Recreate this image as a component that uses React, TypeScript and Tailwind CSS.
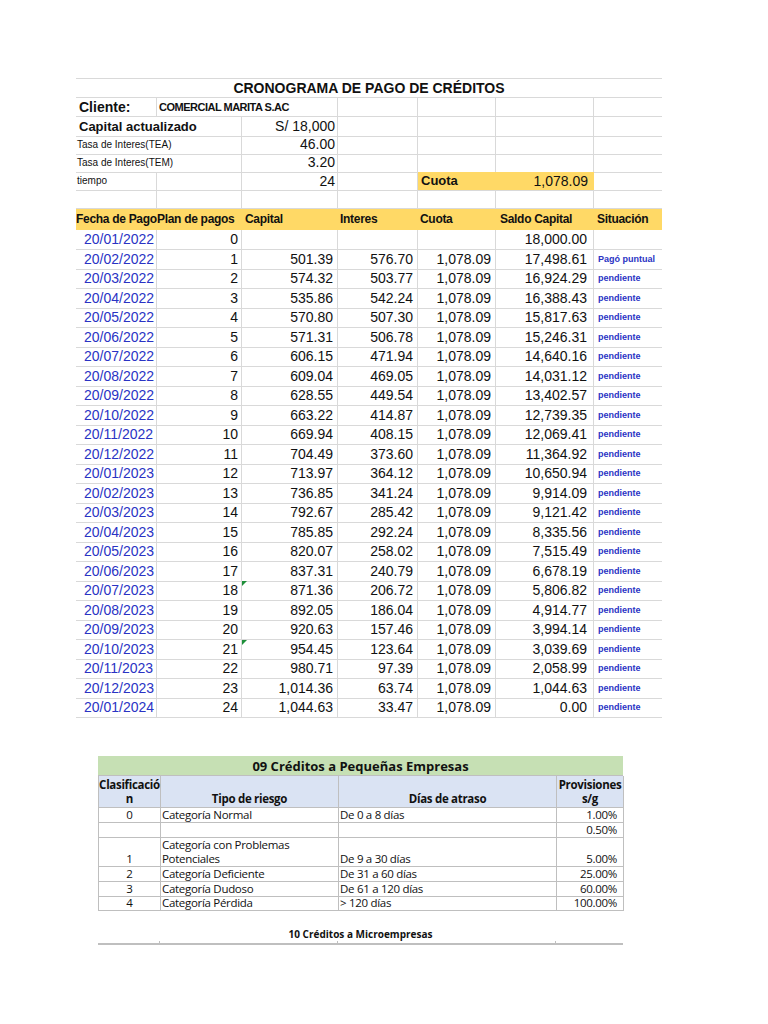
import React from "react";

const data: [string, string, string, string, string, string, string][] = [
  ["20/01/2022","0","","","","18,000.00",""],
  ["20/02/2022","1","501.39","576.70","1,078.09","17,498.61","Pagó puntual"],
  ["20/03/2022","2","574.32","503.77","1,078.09","16,924.29","pendiente"],
  ["20/04/2022","3","535.86","542.24","1,078.09","16,388.43","pendiente"],
  ["20/05/2022","4","570.80","507.30","1,078.09","15,817.63","pendiente"],
  ["20/06/2022","5","571.31","506.78","1,078.09","15,246.31","pendiente"],
  ["20/07/2022","6","606.15","471.94","1,078.09","14,640.16","pendiente"],
  ["20/08/2022","7","609.04","469.05","1,078.09","14,031.12","pendiente"],
  ["20/09/2022","8","628.55","449.54","1,078.09","13,402.57","pendiente"],
  ["20/10/2022","9","663.22","414.87","1,078.09","12,739.35","pendiente"],
  ["20/11/2022","10","669.94","408.15","1,078.09","12,069.41","pendiente"],
  ["20/12/2022","11","704.49","373.60","1,078.09","11,364.92","pendiente"],
  ["20/01/2023","12","713.97","364.12","1,078.09","10,650.94","pendiente"],
  ["20/02/2023","13","736.85","341.24","1,078.09","9,914.09","pendiente"],
  ["20/03/2023","14","792.67","285.42","1,078.09","9,121.42","pendiente"],
  ["20/04/2023","15","785.85","292.24","1,078.09","8,335.56","pendiente"],
  ["20/05/2023","16","820.07","258.02","1,078.09","7,515.49","pendiente"],
  ["20/06/2023","17","837.31","240.79","1,078.09","6,678.19","pendiente"],
  ["20/07/2023","18","871.36","206.72","1,078.09","5,806.82","pendiente"],
  ["20/08/2023","19","892.05","186.04","1,078.09","4,914.77","pendiente"],
  ["20/09/2023","20","920.63","157.46","1,078.09","3,994.14","pendiente"],
  ["20/10/2023","21","954.45","123.64","1,078.09","3,039.69","pendiente"],
  ["20/11/2023","22","980.71","97.39","1,078.09","2,058.99","pendiente"],
  ["20/12/2023","23","1,014.36","63.74","1,078.09","1,044.63","pendiente"],
  ["20/01/2024","24","1,044.63","33.47","1,078.09","0.00","pendiente"],
];

const cols = "grid grid-cols-[81px_85px_96px_80px_78px_98px_68px]";
const cell = "border-r border-b border-[#d9d9d9] overflow-hidden whitespace-nowrap";

export default function App() {
  return (
    <div className="w-[768px] h-[1024px] bg-white relative" style={{ fontFamily: '"Liberation Sans", Arial, sans-serif' }}>
      <div className="absolute left-[76px] top-[78px] w-[586px] text-[#111]">
        <div className="h-[20px] border-b border-t border-[#d9d9d9] text-center font-bold text-[14px] leading-[19px]">CRONOGRAMA DE PAGO DE CRÉDITOS</div>
        <div className={cols + " h-[19px]"}>
          <div className={cell + " font-bold text-[14px] leading-[18px] pl-[3px]"}>Cliente:</div>
          <div className="col-span-2 border-r border-b border-[#d9d9d9] font-bold text-[11px] leading-[18px] tracking-[-0.5px] pl-[2px]">COMERCIAL MARITA S.AC</div>
          <div className={cell}></div><div className={cell}></div><div className={cell}></div><div className="border-b border-[#d9d9d9]"></div>
        </div>
        <div className={cols + " h-[19px]"}>
          <div className="col-span-2 border-r border-b border-[#d9d9d9] font-bold text-[13px] leading-[19px] pl-[3px]">Capital actualizado</div>
          <div className={cell + " text-right pr-[2px] text-[14px] leading-[18px]"}>S/ 18,000</div>
          <div className={cell}></div><div className={cell}></div><div className={cell}></div><div className="border-b border-[#d9d9d9]"></div>
        </div>
        {[["Tasa de Interes(TEA)","46.00"],["Tasa de Interes(TEM)","3.20"]].map(([a,b]) => (
          <div key={a} className={cols + " h-[18px]"}>
            <div className="col-span-2 border-r border-b border-[#d9d9d9] text-[10px] leading-[18px] pl-[1px]">{a}</div>
            <div className={cell + " text-right pr-[2px] text-[14px] leading-[17px]"}>{b}</div>
            <div className={cell}></div><div className={cell}></div><div className={cell}></div><div className="border-b border-[#d9d9d9]"></div>
          </div>
        ))}
        <div className={cols + " h-[19px]"}>
          <div className={cell + " text-[10px] leading-[18px] pl-[1px]"}>tiempo</div>
          <div className={cell}></div>
          <div className={cell + " text-right pr-[2px] text-[14px] leading-[18px]"}>24</div>
          <div className={cell}></div>
          <div className="bg-[#ffd966] border-b border-[#d9d9d9] font-bold text-[13px] leading-[18px] pl-[3px]">Cuota</div>
          <div className="bg-[#ffd966] border-b border-[#d9d9d9] text-right pr-[6px] text-[14px] leading-[18px]">1,078.09</div>
          <div className="border-b border-[#d9d9d9]"></div>
        </div>
        <div className={cols + " h-[18px]"}>
          <div className={cell}></div><div className={cell}></div><div className={cell}></div><div className={cell}></div><div className={cell}></div><div className={cell}></div><div className="border-b border-[#d9d9d9]"></div>
        </div>
        <div className={cols + " h-[21px] bg-[#ffd966] font-bold text-[12px] leading-[21px] tracking-[-0.3px]"}>
          <div className="whitespace-nowrap overflow-hidden">Fecha de Pago</div>
          <div className="whitespace-nowrap">Plan de pagos</div>
          <div className="pl-[3px]">Capital</div>
          <div className="pl-[2px]">Interes</div>
          <div className="pl-[2px]">Cuota</div>
          <div className="pl-[4px]">Saldo Capital</div>
          <div className="pl-[3px]">Situación</div>
        </div>
        {data.map((r, i) => (
          <div key={i} className={cols + " h-[19.5px] text-[14px] leading-[19px]"}>
            <div className={cell + " text-[#2a33c4] pl-[8px]"}>{r[0]}</div>
            <div className={cell + " text-right pr-[3px]"}>{r[1]}</div>
            <div className={cell + " text-right pr-[4px] relative"}>
              {(i === 18 || i === 21) && <span className="absolute left-0 top-0 w-0 h-0 border-t-[5px] border-t-[#1e8f3a] border-r-[5px] border-r-transparent"></span>}
              {r[2]}
            </div>
            <div className={cell + " text-right pr-[4px]"}>{r[3]}</div>
            <div className={cell + " text-right pr-[4px]"}>{r[4]}</div>
            <div className={cell + " text-right pr-[6px]"}>{r[5]}</div>
            <div className="border-b border-[#d9d9d9] text-[#2a33c4] font-bold text-[9px] pl-[4px] whitespace-nowrap">{r[6]}</div>
          </div>
        ))}
      </div>

      <div className="absolute left-[98px] top-[756px] w-[525px] text-[#111]" style={{ fontFamily: '"Open Sans", "Liberation Sans", sans-serif' }}>
        <div className="h-[20px] bg-[#c6e0b4] text-center font-bold text-[13px] leading-[20px] border-b border-[#bfbfbf]">09 Créditos a Pequeñas Empresas</div>
        {(() => {
          const g = "grid grid-cols-[62px_178px_218px_67px]";
          const c = "border-r border-b border-[#bfbfbf] text-[11.5px] leading-[14px] tracking-[-0.3px]";
          const rows: [string, string, string, string][] = [
            ["0","Categoría Normal","De 0 a 8 días","1.00%"],
            ["","","","0.50%"],
            ["1","Categoría con Problemas\nPotenciales","De 9 a 30 días","5.00%"],
            ["2","Categoría Deficiente","De 31 a 60 días","25.00%"],
            ["3","Categoría Dudoso","De 61 a 120 días","60.00%"],
            ["4","Categoría Pérdida","> 120 días","100.00%"],
          ];
          return (
            <>
              <div className={g + " bg-[#dae3f3] font-bold h-[32px] border-l border-[#bfbfbf]"}>
                <div className={c + " text-center flex items-end justify-center pb-[1px]"}>Clasificació<br/>n</div>
                <div className={c + " flex items-end justify-center pb-[1px]"}>Tipo de riesgo</div>
                <div className={c + " flex items-end justify-center pb-[1px]"}>Días de atraso</div>
                <div className={c + " text-center flex items-end justify-center pb-[1px]"}>Provisiones<br/>s/g</div>
              </div>
              {rows.map((r, i) => (
                <div key={i} className={g + " border-l border-[#bfbfbf] " + (i === 2 ? "h-[30px]" : "h-[14.5px]")}>
                  <div className={c + " text-center flex items-end justify-center"}>{r[0]}</div>
                  <div className={c + " whitespace-pre-line flex items-end pl-[1px]"}>{r[1]}</div>
                  <div className={c + " flex items-end pl-[1px]"}>{r[2]}</div>
                  <div className={c + " flex items-end justify-end pr-[6px]"}>{r[3]}</div>
                </div>
              ))}
              <div className="h-[16px]"></div>
              <div className="text-center font-bold text-[10px] leading-[14px]">10 Créditos a Microempresas</div>
              <div className="grid grid-cols-[62px_178px_218px_67px] h-[4px] border-b-2 border-[#bfbfbf]">
                <div className="border-r border-[#bfbfbf]"></div><div className="border-r border-[#bfbfbf]"></div><div className="border-r border-[#bfbfbf]"></div><div></div>
              </div>
            </>
          );
        })()}
      </div>
    </div>
  );
}
